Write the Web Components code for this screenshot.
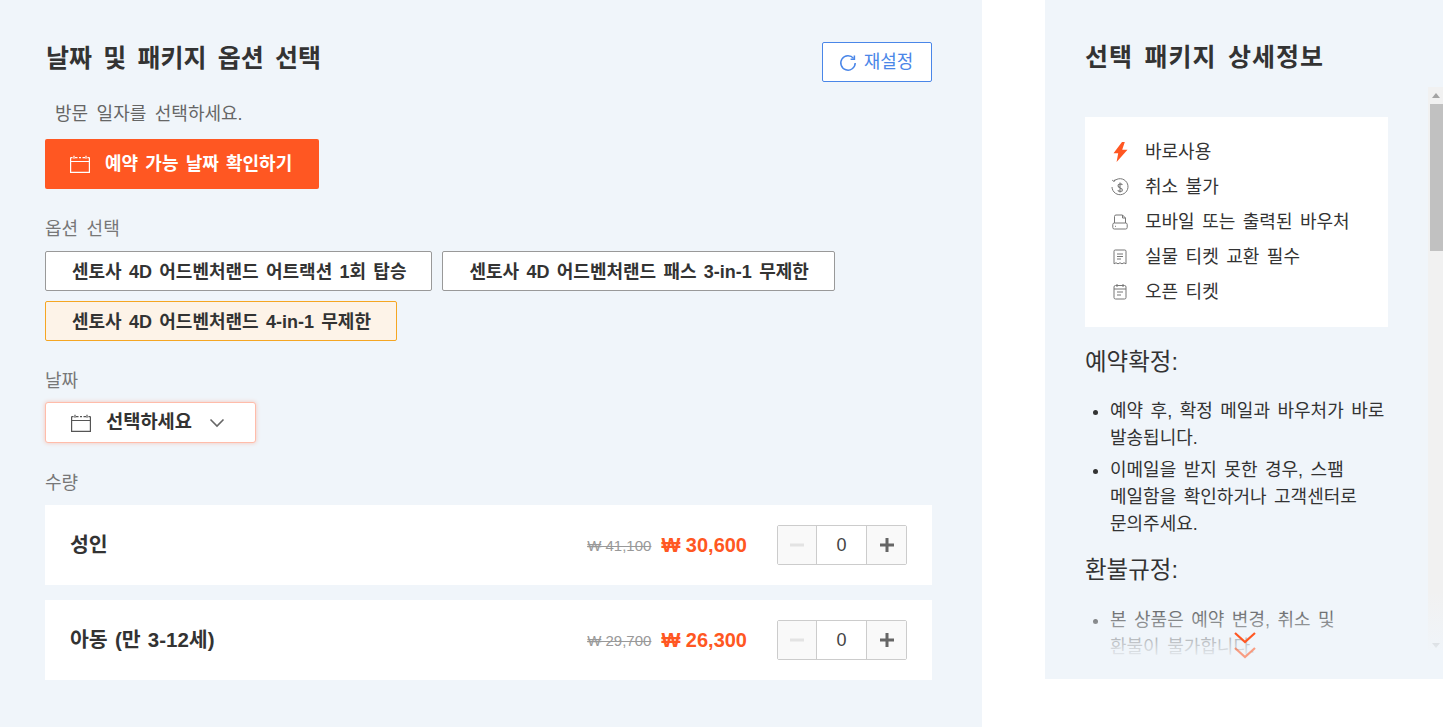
<!DOCTYPE html>
<html lang="ko">
<head>
<meta charset="utf-8">
<title>패키지 옵션 선택</title>
<style>
	html, body { margin: 0; height: 100%; background: #fff; overflow: hidden; }
	body {
		font-family: "Liberation Sans", "Noto Sans CJK KR", sans-serif;
		color: #333;
		word-spacing: 3.5px;
	}
</style>
</head>
<body>
<booking-page></booking-page>

<script>
const icons = {
	calendar: `<svg viewBox="0 0 20 18" width="20" height="18" fill="none" stroke="currentColor" stroke-width="1.2"><path d="M.6 2.600h2M5 2.600h2.500M12.500 2.600H15M17.400 2.600h2M.6 2.600v14.800h18.800V2.600M.6 6.500h18.800M4 .8v3M16 .8v3M9 2.600h2" /></svg>`,
	reset: `<svg viewBox="0 0 18 18" width="18" height="18" fill="none" stroke="currentColor" stroke-width="1.5"><path d="M14.600 4.400A7.200 7.200 0 1 0 16.200 9" /><path d="M15.400 1.400v3.800h-3.800" /></svg>`,
	chevron: `<svg viewBox="0 0 16 10" width="16" height="10" fill="none" stroke="currentColor" stroke-width="1.6"><path d="M1.500 1.500 8 8l6.500-6.500" /></svg>`,
	more: `<svg viewBox="0 0 22 12" width="22" height="12" fill="none" stroke="currentColor" stroke-width="2.200"><path d="M1 1l10 9 10-9" /></svg>`,
	bolt: `<svg viewBox="0 0 15 20" width="15" height="20" fill="#ff5722"><path d="M9 0 .5 11.300h4.700L3.600 20 14.500 7.800H9.200L11.800 0z" /></svg>`,
	refund: `<svg viewBox="0 0 18 18" width="18" height="18" fill="none" stroke="#777" stroke-width="1"><path d="M3 3.400A8 8 0 1 1 1 9" /><path d="M1.200 2.200l1.800 1.200 1.200-2" /><path d="M11.400 6.800C10.400 5.500 7 5.500 7 7.700S11.400 9.900 11.400 12 7.900 13.800 6.700 12.300M9 4.500v10" stroke-width="1.100" /></svg>`,
	voucher: `<svg viewBox="0 0 16 16" width="16" height="16" fill="none" stroke="#777" stroke-width="1"><path d="M2.500 9V2.500A1.500 1.500 0 0 1 4 1h6.500l3 3v5M.8 10.500A1.500 1.500 0 0 1 2.300 9h11.400a1.500 1.500 0 0 1 1.500 1.500v3a1.500 1.500 0 0 1-1.500 1.500H2.300a1.500 1.500 0 0 1-1.500-1.500z" /><path d="M10.500 1v3h3M3 12.300h1" /></svg>`,
	receipt: `<svg viewBox="0 0 14 16" width="14" height="16" fill="none" stroke="#777" stroke-width="1"><path d="M1 14.800V2.200A1.200 1.200 0 0 1 2.200 1h9.600A1.200 1.200 0 0 1 13 2.200v12.600l-2-1-2 1-2-1-2 1-2-1zM4 5h6M4 7.500h6M4 10h4" /></svg>`,
	ticket: `<svg viewBox="0 0 14 17" width="14" height="17" fill="none" stroke="#777" stroke-width="1"><rect x="1" y="2.500" width="12" height="13.500" rx="1.500" /><path d="M4 1v3M10 1v3M1 6h12M4 9h6M4 12h4" /></svg>`
};

class BasePart extends HTMLElement {
	constructor(css, html) {
		super();
		this.sr = this.attachShadow({ mode: "open" });
		this.sr.innerHTML = `<style>${css}</style>${html}`;
	}
}

customElements.define("option-chip", class extends BasePart {
	constructor() {
		super(`
			:host {
				box-sizing: border-box;
				display: inline-flex;
				align-items: center;
				justify-content: center;
				height: 40px;
				padding: 0 25px 2px 26px;
				background: #fff;
				border: 1px solid #999;
				border-radius: 2px;
				font-size: 18px;
				font-weight: 700;
				word-spacing: 2.300px;
				color: #333;
				white-space: nowrap;
			}
			:host([selected]) { background: #fdf3e8; border-color: #f5a623; }
		`, `<slot></slot>`);
	}
});

customElements.define("field-label", class extends BasePart {
	constructor() {
		super(`
			:host { display: block; font-size: 18px; line-height: 24px; color: #777; }
		`, `<slot></slot>`);
	}
});

customElements.define("qty-stepper", class extends BasePart {
	constructor() {
		super(`
			:host {
				box-sizing: border-box;
				display: flex;
				width: 130px;
				height: 40px;
				border: 1px solid #ccc;
				border-radius: 2px;
				background: #fff;
			}
			.step {
				background: #f9f9f9;
				display: flex;
				align-items: center;
				justify-content: center;
			}
			.step.plus { width: 39px; border-left: 1px solid #ccc; }
			.step.minus { width: 38px; border-right: 1px solid #ccc; }
			.val {
				flex: 1;
				display: flex;
				align-items: center;
				justify-content: center;
				font-size: 18px;
				color: #444;
			}
		`, `
			<div class="step minus"><svg width="14" height="14" viewBox="0 0 14 14"><rect y="5.500" width="14" height="3" fill="#e3e3e3"/></svg></div>
			<div class="val">0</div>
			<div class="step plus"><svg width="14" height="14" viewBox="0 0 14 14" fill="#666"><rect y="5.500" width="14" height="3"/><rect x="5.500" width="3" height="14"/></svg></div>
		`);
	}
});

customElements.define("qty-row", class extends BasePart {
	constructor() {
		super(`
			:host {
				box-sizing: border-box;
				display: flex;
				align-items: center;
				height: 80px;
				padding: 0 25px;
				background: #fff;
				word-spacing: 0;
			}
			.name { flex: 1; font-size: 20.500px; font-weight: 700; color: #333; margin-top: -4px; word-spacing: 1.500px; }
			.old { font-size: 15px; color: #999; text-decoration: line-through; margin-right: 10px; }
			.now { font-size: 20px; font-weight: 700; color: #ff5722; margin-right: 30px; }
		`, `
			<div class="name"></div>
			<span class="old"></span>
			<span class="now"></span>
			<qty-stepper></qty-stepper>
		`);
		this.sr.querySelector(".name").textContent = this.getAttribute("name");
		this.sr.querySelector(".old").textContent = "₩ " + this.getAttribute("old");
		this.sr.querySelector(".now").textContent = "₩ " + this.getAttribute("now");
	}
});

customElements.define("feature-item", class extends BasePart {
	constructor() {
		super(`
			:host { display: flex; align-items: center; height: 35px; font-size: 18px; word-spacing: 2.500px; color: #333; }
			.ic { width: 18px; display: flex; justify-content: center; margin: 0 16px 0 26px; }
			svg { display: block; margin-top: 4px; }
		`, `<span class="ic"></span><slot></slot>`);
		this.sr.querySelector(".ic").innerHTML = icons[this.getAttribute("icon")];
	}
});

customElements.define("option-panel", class extends BasePart {
	constructor() {
		super(`
			:host {
				box-sizing: border-box;
				display: block;
				width: 982px;
				height: 727px;
				padding: 40px 50px 0 45px;
				background: #f0f5fa;
			}
			header { display: flex; justify-content: space-between; height: 42px; }
			h2 { margin: 0; font-size: 25px; line-height: 36px; font-weight: 700; color: #333; padding-left: 1px; word-spacing: 4.300px; }
			.reset {
				box-sizing: border-box;
				display: flex;
				align-items: center;
				justify-content: center;
				gap: 7px;
				width: 110px;
				height: 40px;
				margin-top: 2px;
				padding-right: 2px;
				background: #fff;
				border: 1px solid #4a86e8;
				border-radius: 2px;
				color: #4a86e8;
				font-size: 18px;
			}
			.reset span { margin-top: -5px; }
			.reset svg { margin-top: 2px; }
			.hint { margin: 19px 0 12px 10px; font-size: 18px; line-height: 26px; color: #666; }
			.cta {
				box-sizing: border-box;
				display: flex;
				align-items: center;
				gap: 15px;
				width: 274px;
				height: 50px;
				padding-left: 25px;
				background: #ff5722;
				border-radius: 2px;
				color: #fff;
				font-size: 18px;
				word-spacing: 2.200px;
				font-weight: 700;
			}
			.cta span { margin-top: -5px; }
			.opt-label { margin-top: 28px; margin-bottom: 10px; }
			.chips { display: flex; flex-wrap: wrap; gap: 10px; }
			.date-label { margin-top: 28px; margin-bottom: 9px; }
			.date {
				box-sizing: border-box;
				display: flex;
				align-items: center;
				width: 211px;
				height: 41px;
				padding-left: 25px;
				background: #fff;
				border: 1px solid #ffbcaa;
				border-radius: 3px;
				box-shadow: 0 0 4px rgba(255, 87, 34, .3);
				font-size: 18.700px;
				font-weight: 700;
				color: #333;
			}
			.date .txt { margin-top: -7px; }
			.date .cal { color: #555; display: flex; margin-right: 15px; }
			.date .chev { color: #666; display: flex; margin-left: 17px; }
			.qty-label { margin-top: 28px; margin-bottom: 10px; }
			.rows { display: flex; flex-direction: column; gap: 15px; }
		`, `
			<header>
				<h2>날짜 및 패키지 옵션 선택</h2>
				<div class="reset">${icons.reset}<span>재설정</span></div>
			</header>
			<p class="hint">방문 일자를 선택하세요.</p>
			<div class="cta">${icons.calendar}<span>예약 가능 날짜 확인하기</span></div>
			<field-label class="opt-label">옵션 선택</field-label>
			<div class="chips">
				<option-chip>센토사 4D 어드벤처랜드 어트랙션 1회 탑승</option-chip>
				<option-chip>센토사 4D 어드벤처랜드 패스 3-in-1 무제한</option-chip>
				<option-chip selected>센토사 4D 어드벤처랜드 4-in-1 무제한</option-chip>
			</div>
			<field-label class="date-label">날짜</field-label>
			<div class="date"><span class="cal">${icons.calendar}</span><span class="txt">선택하세요</span><span class="chev">${icons.chevron}</span></div>
			<field-label class="qty-label">수량</field-label>
			<div class="rows">
				<qty-row name="성인" old="41,100" now="30,600"></qty-row>
				<qty-row name="아동 (만 3-12세)" old="29,700" now="26,300"></qty-row>
			</div>
		`);
	}
});

customElements.define("detail-panel", class extends BasePart {
	constructor() {
		super(`
			:host {
				box-sizing: border-box;
				display: block;
				position: relative;
				width: 398px;
				height: 679px;
				background: #f0f5fa;
				overflow: hidden;
			}
			h2 { margin: 0; padding: 39px 0 0 40px; height: 117px; box-sizing: border-box; font-size: 25px; line-height: 36px; font-weight: 700; color: #333; letter-spacing: 1px; }
			.body { padding: 0 55px 0 40px; }
			.features { background: #fff; height: 210px; box-sizing: border-box; padding: 15px 0 0; }
			h3 { margin: 18px 0 0; font-size: 23.500px; line-height: 34px; font-weight: 400; color: #333; }
			ul { margin: 19px -5px 0 0; padding: 0 0 0 25px; font-size: 18px; word-spacing: 2.500px; line-height: 27px; color: #333; word-break: keep-all; }
			ul.terms { margin-top: 20px; margin-right: 0; }
			li { margin-bottom: 5px; }
			.refund { margin-top: 15px; }
			.fade {
				position: absolute;
				left: 0; right: 0; bottom: 0;
				height: 89px;
				background: linear-gradient(rgba(240, 245, 250, 0), #f0f5fa 79%);
			}
			.more {
				position: absolute;
				left: 189px;
				top: 632px;
				color: #ff5722;
				display: flex;
				flex-direction: column;
				gap: 3px;
			}
			.more svg { display: block; }
			.more svg + svg { opacity: .55; }
			.bar {
				position: absolute;
				right: 0;
				top: 87px;
				width: 15px;
				height: 563px;
				background: #f1f1f1;
			}
			.bar::before {
				content: "";
				position: absolute;
				left: 4px; top: 6px;
				border: 4px solid transparent;
				border-top: 0;
				border-bottom: 5px solid #a3a3a3;
			}
			.bar::after {
				content: "";
				position: absolute;
				left: 4px; bottom: 2px;
				border: 4px solid transparent;
				border-bottom: 0;
				border-top: 5px solid #a3a3a3;
			}
			.thumb { position: absolute; left: 2px; right: 0; top: 17px; height: 147px; background: #c1c1c1; }
		`, `
			<h2>선택 패키지 상세정보</h2>
			<div class="body">
				<div class="features">
					<feature-item icon="bolt">바로사용</feature-item>
					<feature-item icon="refund">취소 불가</feature-item>
					<feature-item icon="voucher">모바일 또는 출력된 바우처</feature-item>
					<feature-item icon="receipt">실물 티켓 교환 필수</feature-item>
					<feature-item icon="ticket">오픈 티켓</feature-item>
				</div>
				<h3>예약확정:</h3>
				<ul>
					<li>예약 후, 확정 메일과 바우처가 바로 발송됩니다.</li>
					<li>이메일을 받지 못한 경우, 스팸 메일함을 확인하거나 고객센터로 문의주세요.</li>
				</ul>
				<h3 class="refund">환불규정:</h3>
				<ul class="terms">
					<li>본 상품은 예약 변경, 취소 및 환불이 불가합니다.</li>
				</ul>
			</div>
			<div class="bar"><div class="thumb"></div></div>
			<div class="fade"></div>
			<div class="more">${icons.more}${icons.more}</div>
		`);
	}
});

customElements.define("booking-page", class extends BasePart {
	constructor() {
		super(`
			:host { display: flex; width: 1443px; height: 727px; overflow: hidden; background: #fff; }
			.gap { width: 63px; }
		`, `
			<option-panel></option-panel>
			<div class="gap"></div>
			<detail-panel></detail-panel>
		`);
	}
});
</script>
</body>
</html>
